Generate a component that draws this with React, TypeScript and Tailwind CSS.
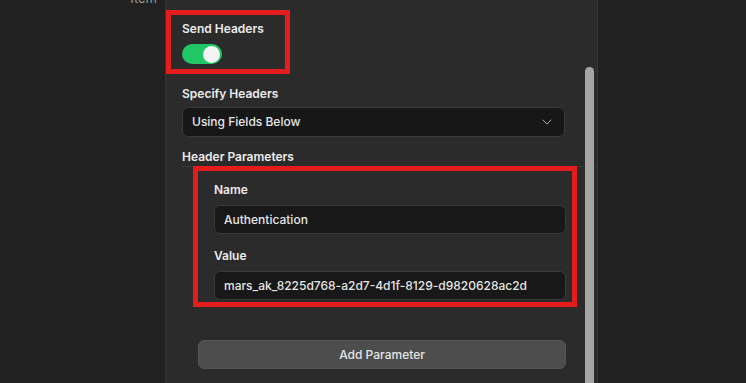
import React from "react";
import { ChevronDown } from "lucide-react";

export default function App() {
  return (
    <div
      className="flex w-[746px] h-[383px] overflow-hidden bg-[#212121] text-[#e6e6e6]"
      style={{ fontFamily: "Inter, 'Noto Sans', sans-serif" }}
    >
      {/* Left panel */}
      <div className="w-[166px] h-full border-r border-[#343434] shrink-0">
        <div className="-mt-[12px] pr-[8px] flex justify-end text-[13px] leading-5 text-[#9a9a9a]">Item</div>
      </div>

      {/* Middle panel */}
      <div className="relative w-[432px] h-full shrink-0 bg-[#2b2b2b] border-r border-[#363636] pt-[10px]">
        <div className="absolute right-[3px] top-[67px] w-[9px] h-[330px] rounded-t-full bg-[#a5a5a5]" />

        {/* Send headers (highlighted) */}
        <div className="w-[124px] border-[5px] border-[#e31c1c] pl-[11px] pt-[4px] pb-[5px]">
          <div className="text-[12px] leading-5 font-semibold text-[#ececec]">Send Headers</div>
          <div className="mt-[5px] w-[40px] h-[20px] rounded-full bg-[#1fc765] flex items-center justify-end pr-[2px]">
            <div className="w-[17px] h-[17px] rounded-full bg-[#f4f4f4]" />
          </div>
        </div>

        <div className="pl-4">
          <div className="mt-[10px] text-[12px] leading-5 font-semibold text-[#ececec]">Specify Headers</div>
          <div className="mt-[3px] w-[383px] h-[30px] rounded-md bg-[#171717] border border-[#3a3a3a] flex items-center justify-between pl-[9px] pr-[9px]">
            <span className="text-[12px] font-medium text-[#e6e6e6]">Using Fields Below</span>
            <ChevronDown className="w-4 h-4 text-[#a8a8a8]" strokeWidth={1.5} />
          </div>

          <div className="mt-[10px] text-[12px] leading-5 font-semibold text-[#ececec]">Header Parameters</div>

          {/* Parameter fields (highlighted) */}
          <div className="-mt-px border-t border-[#3a3a3a]">
            <div className="-mt-px ml-[11px] w-[384px] border-[5px] border-[#e31c1c] pl-[16px] pr-[6px] pt-[9px] pb-[2px]">
              <div className="text-[12px] leading-5 font-semibold text-[#ececec]">Name</div>
              <div className="mt-[5px] h-[29px] rounded-md bg-[#181818] border border-[#3a3a3a] flex items-center pl-[9px] text-[12px] font-medium text-[#e6e6e6]">
                Authentication
              </div>
              <div className="mt-[12px] text-[12px] leading-5 font-semibold text-[#ececec]">Value</div>
              <div className="mt-[5px] h-[29px] rounded-md bg-[#181818] border border-[#3a3a3a] flex items-center pl-[9px] text-[12px] font-medium text-[#e6e6e6]">
                mars_ak_8225d768-a2d7-4d1f-8129-d9820628ac2d
              </div>
            </div>
          </div>

          <div className="mt-[33px] ml-4 w-[368px] h-[29px] rounded-md bg-[#4d4d4d] border border-[#555555] flex items-center justify-center text-[12px] font-medium text-[#e6e6e6]">
            Add Parameter
          </div>
        </div>
      </div>

      {/* Right panel */}
      <div className="flex-1 h-full bg-[#212121]" />
    </div>
  );
}
